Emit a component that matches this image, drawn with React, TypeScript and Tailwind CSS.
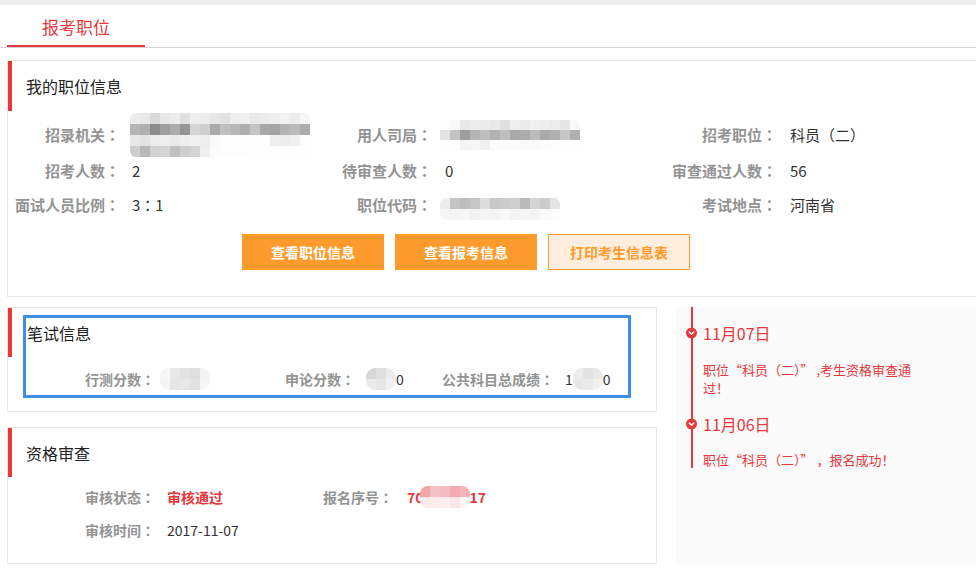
import React from "react";

/* ------------------------------------------------------------------ */
/*  Mosaic (redacted value)                                             */
/* ------------------------------------------------------------------ */
type Shade = number | string;

function Mosaic({
  rows,
  cw = 10,
  ch = 10,
  className = "",
}: {
  rows: Shade[][];
  cw?: number;
  ch?: number;
  className?: string;
}) {
  return (
    <div
      className={`inline-flex shrink-0 flex-col overflow-hidden rounded-[6px] ${className}`}
      aria-hidden="true"
    >
      {rows.map((r, i) => (
        <div key={i} className="flex">
          {r.map((v, j) => (
            <span
              key={j}
              style={{
                width: cw,
                height: ch,
                background: typeof v === "number" ? `rgb(${v},${v},${v})` : v,
              }}
            />
          ))}
        </div>
      ))}
    </div>
  );
}

/* ------------------------------------------------------------------ */
/*  Small pieces                                                        */
/* ------------------------------------------------------------------ */
// centred full-width colon (the TC face puts the dots in the middle)
function Colon() {
  return <span className="font-['Noto_Sans_CJK_TC',sans-serif]">：</span>;
}

function Label({ w = "", text }: { w?: string; text: string }) {
  return (
    <span className={`${w} shrink-0 text-right font-bold text-[#939393]`}>
      {text}
      <Colon />
    </span>
  );
}

function SectionBar({ h }: { h: string }) {
  return <div className={`absolute left-0 top-0 w-[4px] ${h} bg-[#e8383d]`} />;
}

function Dot() {
  return (
    <svg
      viewBox="0 0 12 12"
      className="absolute left-[-17px] top-1/2 h-[11px] w-[11px] -translate-y-1/2"
    >
      <circle cx="6" cy="6" r="6" fill="#e8383d" />
      <path
        d="M3.6 5 L6 7.4 L8.4 5"
        fill="none"
        stroke="#fff"
        strokeWidth="1.6"
        strokeLinecap="round"
        strokeLinejoin="round"
      />
    </svg>
  );
}

/* ------------------------------------------------------------------ */
/*  App                                                                 */
/* ------------------------------------------------------------------ */
export default function App() {
  return (
    <div className="relative h-[571px] w-[976px] overflow-hidden bg-white font-['Noto_Sans_CJK_SC','Noto_Sans',sans-serif] text-[#333]">
      {/* top strip */}
      <div className="h-[5px] bg-[#ececec]" />

      {/* tab */}
      <div className="flex h-[43px] border-b border-[#d2d2d2] pl-[7px]">
        <div className="flex h-[42px] w-[138px] items-center justify-center border-b-2 border-[#e8383d] pt-[3px] text-[17px] leading-none text-[#e8383d]">
          报考职位
        </div>
      </div>

      {/* 我的职位信息 */}
      <div className="relative ml-[7px] mt-[12px] h-[237px] w-[990px] border border-[#e6e6e6]">
        <SectionBar h="h-[50px]" />
        <div className="flex h-[50px] items-center pl-[18px] text-[16px] leading-none text-[#222]">
          我的职位信息
        </div>

        <div className="text-[15px] leading-[24px]">
          {/* row 1 */}
          <div className="flex h-[48px] items-center">
            <div className="flex w-[312px] items-center">
              <Label w="w-[112px]" text="招录机关" />
              <Mosaic
                className="ml-[10px]"
                ch={11}
                rows={[
                  [236, 232, 218, 232, 236, 224, 238, 236, 230, 226, 238, 240, 232, 236, 238, 242, 236, 246],
                  [182, 176, 140, 158, 172, 150, 214, 206, 170, 192, 184, 176, 196, 168, 164, 180, 186, 172],
                  [232, 228, 236, 238, 234, 238, 240, 238, 250, 252, 252, 253, 253, 253, 238, 236, 240, 254],
                  [206, 184, 210, 212, 192, 206, 212, 240, 252, 253, 253, 253, 254, 254, 254, 254, 254, 254],
                ]}
              />
            </div>
            <div className="flex w-[345px] items-center">
              <Label w="w-[112px]" text="用人司局" />
              <Mosaic
                className="ml-[8px]"
                rows={[
                  [252, 248, 232, 236, 234, 232, 224, 238, 234, 240, 238, 236, 230, 248],
                  [226, 196, 158, 180, 190, 178, 190, 170, 172, 188, 170, 176, 198, 176],
                  [254, 254, 244, 246, 240, 252, 252, 252, 250, 250, 252, 254, 254, 254],
                ]}
              />
            </div>
            <div className="flex items-center">
              <Label w="w-[112px]" text="招考职位" />
              <span className="pl-[13px]">科员（二）</span>
            </div>
          </div>

          {/* row 2 */}
          <div className="flex h-[24px] items-center">
            <div className="flex w-[312px] items-center">
              <Label w="w-[112px]" text="招考人数" />
              <span className="pl-[12px]">2</span>
            </div>
            <div className="flex w-[345px] items-center">
              <Label w="w-[112px]" text="待审查人数" />
              <span className="pl-[13px]">0</span>
            </div>
            <div className="flex items-center">
              <Label w="w-[112px]" text="审查通过人数" />
              <span className="pl-[13px]">56</span>
            </div>
          </div>

          {/* row 3 */}
          <div className="mt-[10px] flex h-[24px] items-center">
            <div className="flex w-[312px] items-center">
              <Label w="w-[112px]" text="面试人员比例" />
              <span className="pl-[12px]">
                3<Colon />1
              </span>
            </div>
            <div className="flex w-[345px] items-center">
              <Label w="w-[112px]" text="职位代码" />
              <Mosaic
                className="ml-[8px] mt-[8px]"
                ch={11}
                rows={[
                  [236, 196, 190, 198, 220, 200, 204, 206, 186, 212, 204, 228],
                  [246, 244, 246, 242, 246, 244, 248, 244, 246, 244, 250, 252],
                ]}
              />
            </div>
            <div className="flex items-center">
              <Label w="w-[112px]" text="考试地点" />
              <span className="pl-[13px]">河南省</span>
            </div>
          </div>
        </div>

        {/* buttons */}
        <div className="mt-[17px] flex gap-[11px] pl-[234px] text-[14px] font-bold">
          <button className="flex h-[36px] w-[142px] items-center justify-center bg-[#ff9b2c] text-white">
            查看职位信息
          </button>
          <button className="flex h-[36px] w-[142px] items-center justify-center bg-[#ff9b2c] text-white">
            查看报考信息
          </button>
          <button className="flex h-[36px] w-[142px] items-center justify-center border border-[#ff9b2c] bg-[#ffeedd] text-[#ff9b2c]">
            打印考生信息表
          </button>
        </div>
      </div>

      {/* lower area */}
      <div className="mt-[10px] flex">
        {/* left column */}
        <div className="ml-[7px] w-[650px]">
          {/* 笔试信息 */}
          <div className="relative h-[105px] border border-[#e6e6e6]">
            <SectionBar h="h-[49px]" />
            <div className="ml-[15px] mt-[7px] h-[83px] w-[608px] border-[3px] border-[#3c8fe2]">
              <div className="flex h-[30px] items-center pl-px text-[16px] leading-none text-[#222]">
                笔试信息
              </div>
              <div className="mt-[19px] flex h-[24px] items-center text-[14px]">
                <Label w="w-[129px]" text="行测分数" />
                <div className="flex w-[130px] items-center pl-[5px]">
                  <Mosaic
                    rows={[
                      [246, 232, 226, 222, 244],
                      [244, 230, 232, 226, 246],
                    ]}
                    ch={11}
                    className="rounded-[9px]"
                  />
                </div>
                <Label text="申论分数" />
                <div className="flex w-[87px] items-center pl-[11px]">
                  <Mosaic
                    rows={[
                      [214, 222, 236],
                      [234, 230, 240],
                    ]}
                    ch={11}
                    className="rounded-[9px]"
                  />
                  <span>0</span>
                </div>
                <Label text="公共科目总成绩" />
                <div className="flex items-center pl-[11px]">
                  <span>1</span>
                  <Mosaic
                    rows={[
                      [236, 226, 232],
                      [232, 234, 240],
                    ]}
                    ch={11}
                    className="rounded-[9px]"
                  />
                  <span>0</span>
                </div>
              </div>
            </div>
          </div>

          {/* 资格审查 */}
          <div className="relative mt-[15px] h-[137px] border border-[#e6e6e6]">
            <SectionBar h="h-[49px]" />
            <div className="flex h-[49px] items-center pl-[18px] text-[16px] leading-none text-[#222]">
              资格审查
            </div>
            <div className="text-[14px]">
              <div className="mt-[8px] flex h-[24px] items-center">
                <Label w="w-[147px]" text="审核状态" />
                <span className="w-[168px] pl-[12px] font-bold text-[#e8383d]">审核通过</span>
                <Label text="报名序号" />
                <div className="flex items-center pl-[14px] font-bold text-[#e8383d]">
                  <span>70</span>
                  <Mosaic
                    className="-ml-[4px] rounded-[8px]"
                    ch={11}
                    rows={[
                      ["#f2a6a8", "#f3c2c6", "#f4bcc0", "#f2abb0", "#f4b4b8"],
                      ["#fbeaea", "#fcecec", "#fbeff0", "#fde6e7", "#fff5f5"],
                    ]}
                  />
                  <span>17</span>
                </div>
              </div>
              <div className="mt-[9px] flex h-[24px] items-center">
                <Label w="w-[147px]" text="审核时间" />
                <span className="pl-[12px]">2017-11-07</span>
              </div>
            </div>
          </div>
        </div>

        {/* timeline */}
        <div className="relative ml-[19px] h-[258px] flex-1 bg-[#fafafa] pl-[27px] pt-[16px] text-[#e8383d]">
          <div className="absolute left-[15px] top-0 h-[161px] w-[2px] bg-[#e8383d]" />

          <div className="relative flex h-[20px] items-center text-[16px] leading-none">
            <Dot />
            11月07日
          </div>
          <p className="mt-[18px] w-[216px] text-[13px] leading-[18px]">
            职位“科员（二）” ,考生资格审查通过！
          </p>

          <div className="relative mt-[17px] flex h-[20px] items-center text-[16px] leading-none">
            <Dot />
            11月06日
          </div>
          <p className="mt-[17px] text-[13px] leading-[18px]">
            职位“科员（二）” ，报名成功！
          </p>
        </div>
      </div>
    </div>
  );
}
